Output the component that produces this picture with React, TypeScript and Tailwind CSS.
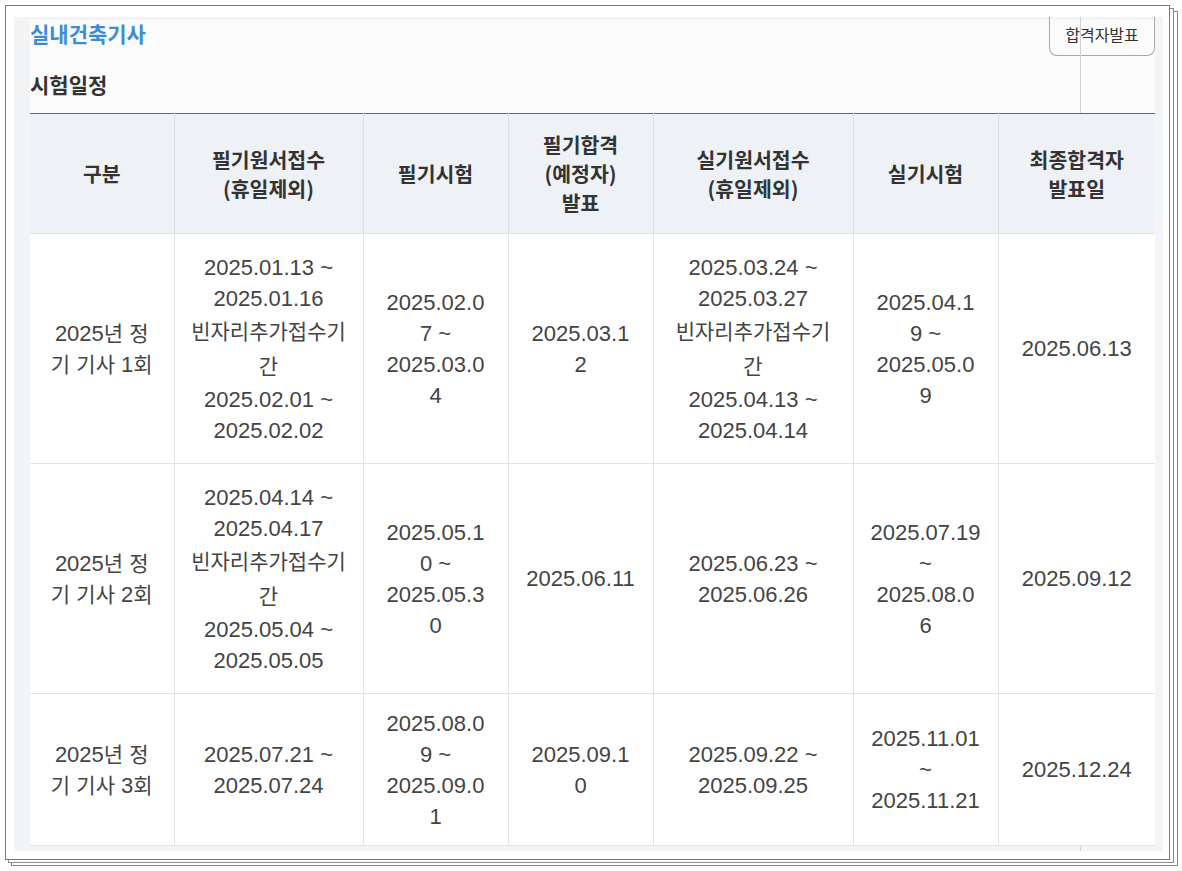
import type { ReactNode } from 'react'

const font = "font-['Liberation_Sans','Noto_Sans_CJK_KR',sans-serif]"

const headers = [
  ['구분'],
  ['필기원서접수', '(휴일제외)'],
  ['필기시험'],
  ['필기합격', '(예정자)', '발표'],
  ['실기원서접수', '(휴일제외)'],
  ['실기시험'],
  ['최종합격자', '발표일'],
]

const colWidths = ['w-[144px]', 'w-[189px]', 'w-[145px]', 'w-[145px]', 'w-[200px]', 'w-[145px]', 'w-[157px]']

const rows = [
  {
    height: 'h-[230px]',
    cells: [
      ['2025년 정', '기 기사 1회'],
      ['2025.01.13 ~', '2025.01.16', '빈자리추가접수기', '간', '2025.02.01 ~', '2025.02.02'],
      ['2025.02.0', '7 ~', '2025.03.0', '4'],
      ['2025.03.1', '2'],
      ['2025.03.24 ~', '2025.03.27', '빈자리추가접수기', '간', '2025.04.13 ~', '2025.04.14'],
      ['2025.04.1', '9 ~', '2025.05.0', '9'],
      ['2025.06.13'],
    ],
  },
  {
    height: 'h-[230px]',
    cells: [
      ['2025년 정', '기 기사 2회'],
      ['2025.04.14 ~', '2025.04.17', '빈자리추가접수기', '간', '2025.05.04 ~', '2025.05.05'],
      ['2025.05.1', '0 ~', '2025.05.3', '0'],
      ['2025.06.11'],
      ['2025.06.23 ~', '2025.06.26'],
      ['2025.07.19', '~', '2025.08.0', '6'],
      ['2025.09.12'],
    ],
  },
  {
    height: 'h-[152px]',
    cells: [
      ['2025년 정', '기 기사 3회'],
      ['2025.07.21 ~', '2025.07.24'],
      ['2025.08.0', '9 ~', '2025.09.0', '1'],
      ['2025.09.1', '0'],
      ['2025.09.22 ~', '2025.09.25'],
      ['2025.11.01', '~', '2025.11.21'],
      ['2025.12.24'],
    ],
  },
]

const hangul = /[\uAC00-\uD7A3]/

// hangul runs are set a little smaller than the digits, like the original font
function Mixed({ text }: { text: string }) {
  const parts = text.split(/([\uAC00-\uD7A3]+)/)
  const out: ReactNode[] = parts.map((p, i) =>
    hangul.test(p) ? (
      <span key={i} className="text-[21px]">
        {p}
      </span>
    ) : (
      p
    )
  )
  return <>{out}</>
}

function Line({ text }: { text: string }) {
  const koreanOnly = /^[\uAC00-\uD7A3\s]+$/.test(text)
  return (
    <div className={koreanOnly ? 'whitespace-nowrap leading-[35px]' : 'whitespace-nowrap leading-[31px]'}>
      <Mixed text={text} />
    </div>
  )
}

export default function App() {
  return (
    <div className={`relative w-[1182px] h-[871px] bg-white ${font}`}>
      {/* stacked sheets behind */}
      <div className="absolute left-[11px] top-[11px] w-[1167px] h-[855px] border border-[#8a8a8a] bg-white" />
      <div className="absolute left-[8px] top-[8px] w-[1166px] h-[855px] border border-[#8a8a8a] bg-white" />

      <div className="relative z-10 ml-[5px] pt-[5px]">
        <div className="w-[1165px] h-[855px] border border-[#7a7a7a] bg-white pl-[8px] pt-[11px]">
          <div className="relative w-[1149px] h-[834px] overflow-hidden bg-[#f3f4f6] pl-4 pr-2 pt-[3px] pb-[6px]">
            <div className="absolute left-[1066px] top-0 bottom-0 w-px bg-[#d2d2d2] z-[5]" />

            <div className="w-[1125px] h-full bg-[#fbfbfc] flex flex-col">
              <div className="flex items-start h-[36px]">
                <h1 className="text-[21px] leading-[26px] font-bold text-[#3c8dd4] font-['Noto_Sans_CJK_KR',sans-serif]">
                  실내건축기사
                </h1>
                <button className="ml-auto -mt-[3px] w-[106px] h-[39px] pb-[5px] flex items-center justify-center border-x border-b border-[#a8a8a8] rounded-b-[8px] text-[16px] text-[#333] font-['Noto_Sans_CJK_KR',sans-serif]">
                  합격자발표
                </button>
              </div>

              <h2 className="mt-[14px] text-[21px] leading-[28px] font-bold text-[#333] font-['Noto_Sans_CJK_KR',sans-serif]">
                시험일정
              </h2>

              <table className="relative z-10 mt-[15px] w-full table-fixed border-collapse bg-white border-t border-[#666]">
                <colgroup>
                  {colWidths.map((w, i) => (
                    <col key={i} className={w} />
                  ))}
                </colgroup>
                <thead>
                  <tr className="h-[120px] bg-[#eef1f5]">
                    {headers.map((h, i) => (
                      <th
                        key={i}
                        className="border-r last:border-r-0 border-[#dde1e6] align-middle text-center font-bold text-[20.5px] leading-[29px] text-[#333] font-['Noto_Sans_CJK_KR',sans-serif]"
                      >
                        {h.map((l) => (
                          <div key={l}>{l}</div>
                        ))}
                      </th>
                    ))}
                  </tr>
                </thead>
                <tbody>
                  {rows.map((r, ri) => (
                    <tr key={ri} className={`${r.height} border-t border-[#e2e4e7]`}>
                      {r.cells.map((c, ci) => (
                        <td
                          key={ci}
                          className="border-r last:border-r-0 border-b border-[#e2e4e7] align-middle text-center text-[22px] text-[#444]"
                        >
                          {c.map((l, li) => (
                            <Line key={li} text={l} />
                          ))}
                        </td>
                      ))}
                    </tr>
                  ))}
                </tbody>
              </table>
            </div>
          </div>
        </div>
      </div>
    </div>
  )
}
